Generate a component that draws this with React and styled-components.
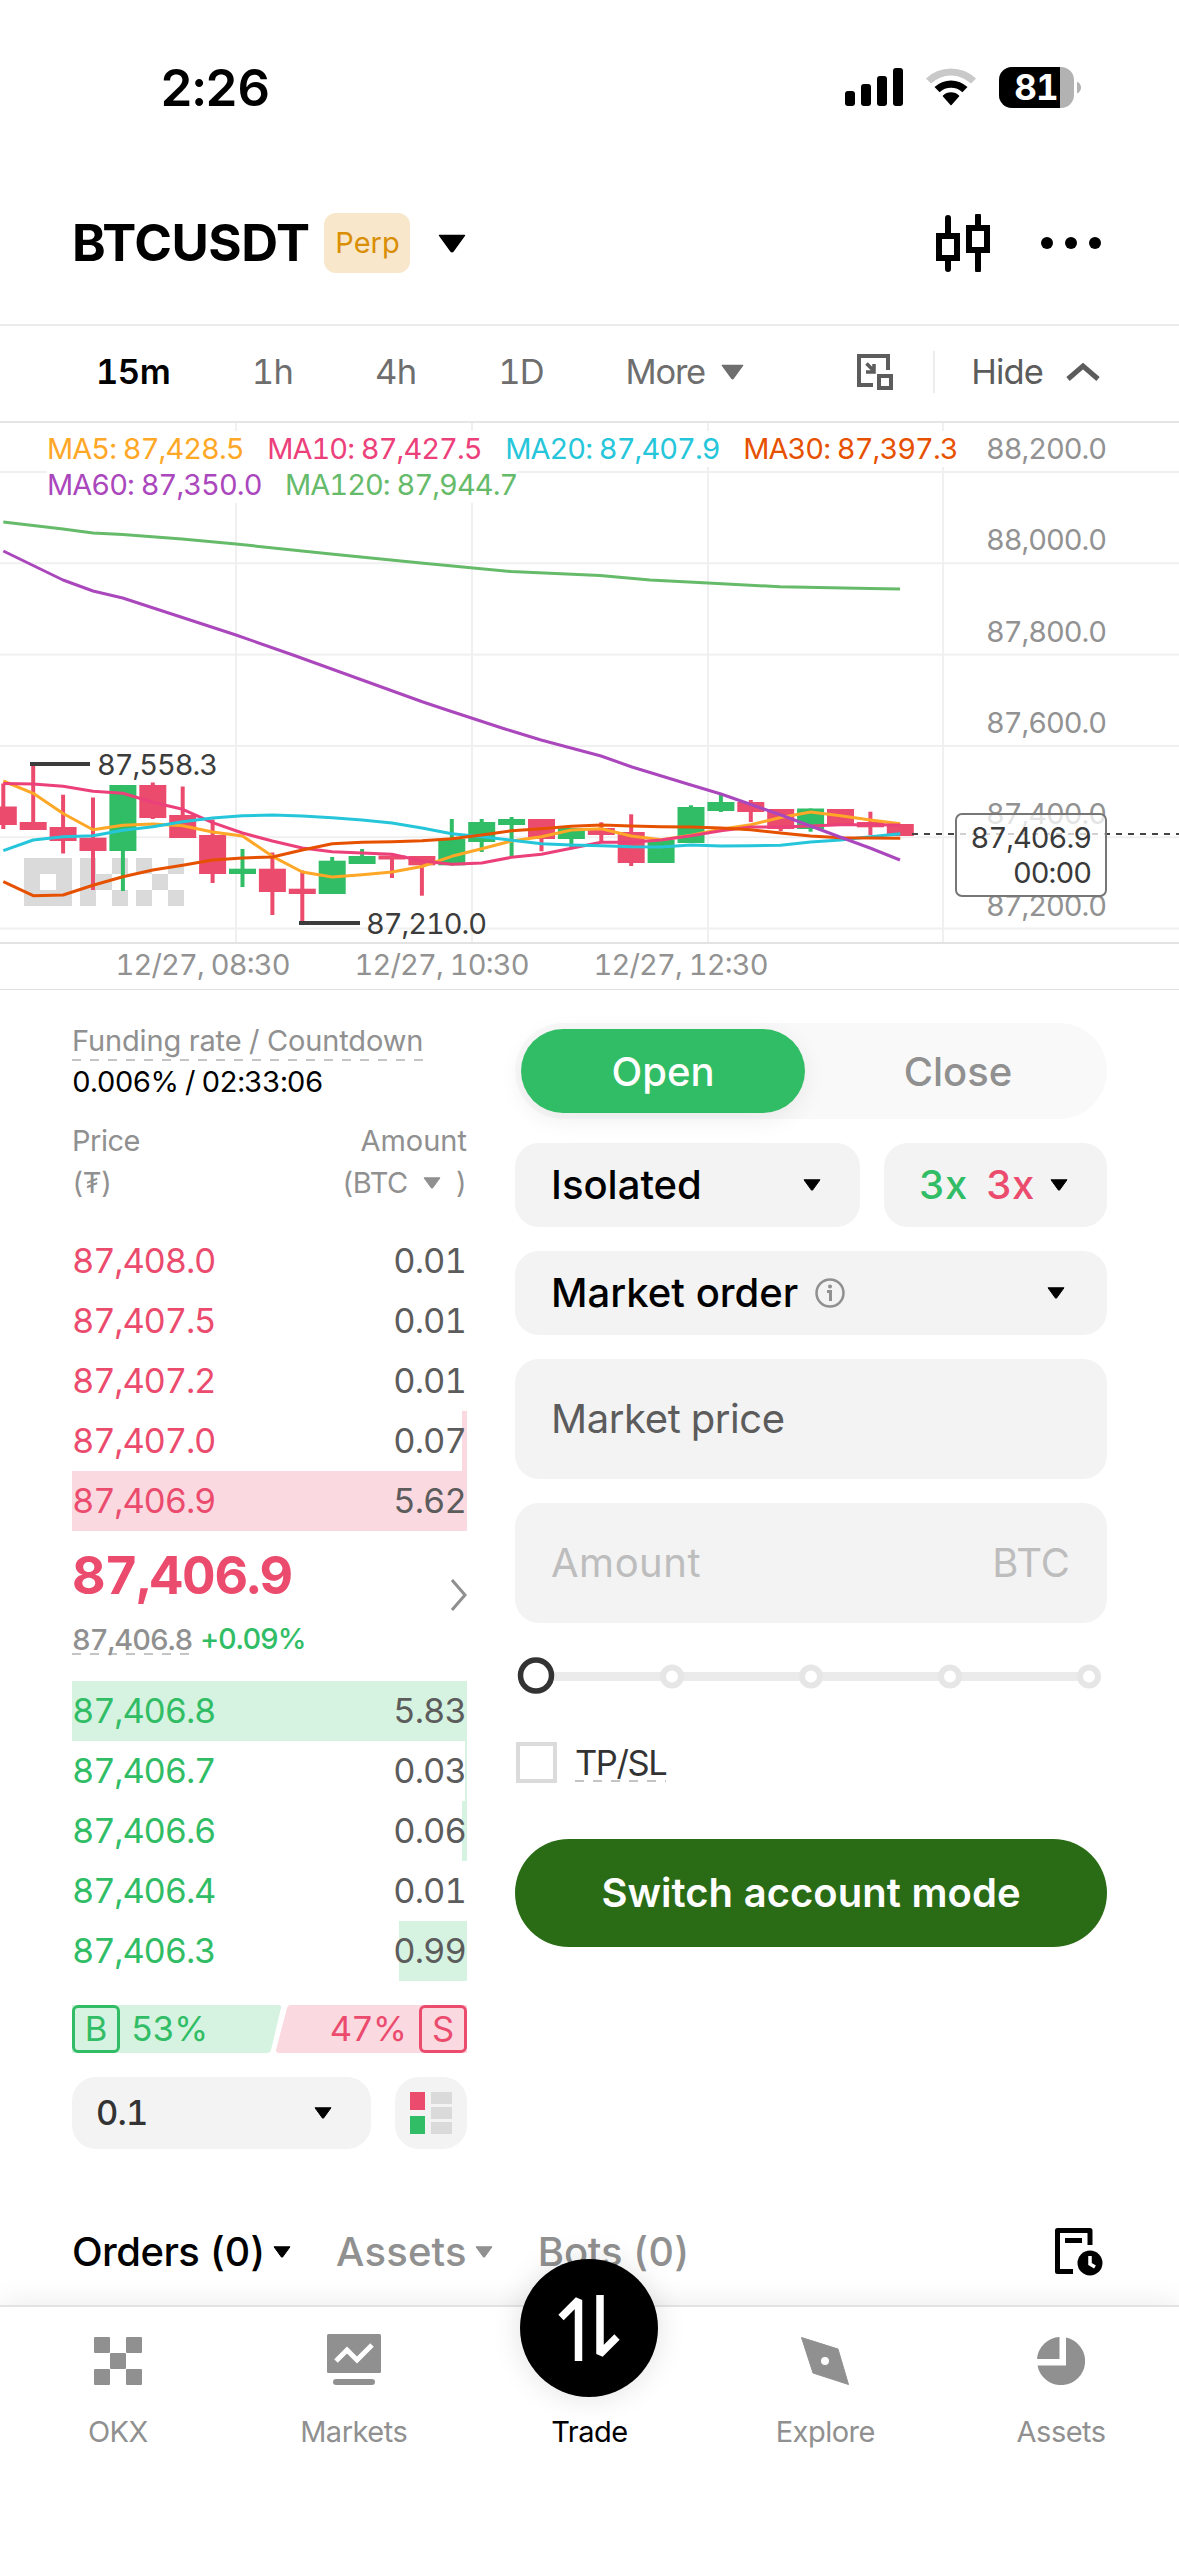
import React, { useState } from 'react';
import styled, { createGlobalStyle } from 'styled-components';

const GREEN = '#31bd65';
const RED = '#eb4b6d';

const GlobalStyle = createGlobalStyle`
  * { box-sizing: border-box; }
  body {
    margin: 0;
    background: #fff;
    color: #000;
    font-family: Inter, "Liberation Sans", sans-serif;
    font-variant-numeric: tabular-nums;
  }
  svg { display: block; flex: none; }
`;

const Screen = styled.div`
  display: flex;
  flex-direction: column;
  width: 1179px;
  height: 2556px;
  overflow: hidden;
  background: #fff;
`;

const Text = styled.span`
  font-size: ${(p) => p.$size || 29}px;
  font-weight: ${(p) => p.$weight || 400};
  color: ${(p) => p.$color || '#000'};
  letter-spacing: ${(p) => p.$ls || 0}px;
  line-height: ${(p) => p.$lh || 42}px;
  white-space: nowrap;
`;

const Dashed = styled(Text)`
  background: repeating-linear-gradient(90deg, #c4c4c4 0 9px, transparent 9px 18px) 0 100% / 100% 2px no-repeat;
`;

/* ---------- top ---------- */

const StatusBar = styled.div`
  display: flex;
  align-items: center;
  justify-content: space-between;
  height: 162px;
  padding: 13px 97px 0 160px;
`;

const StatusIcons = styled.div`
  display: flex;
  align-items: center;
  gap: 23px;
`;

const Header = styled.div`
  display: flex;
  align-items: center;
  height: 162px;
  padding: 0 78px 0 72px;
`;

const Badge = styled.div`
  display: flex;
  align-items: center;
  justify-content: center;
  width: 86px;
  height: 60px;
  margin: 0 28px 0 15px;
  border-radius: 12px;
  background: #f8e7cb;
`;

const Spacer = styled.div`
  flex: 1;
`;

const Intervals = styled.div`
  display: flex;
  align-items: center;
  height: 97px;
  padding: 0 79px 3px 96px;
  border-top: 2px solid #ebebeb;
`;

const IntervalTabs = styled.div`
  display: flex;
  align-items: center;
  gap: 81.5px;
  flex: 1;
`;

const Row = styled.div`
  display: flex;
  align-items: center;
  gap: ${(p) => p.$gap || 0}px;
`;

const ThinLine = styled.div`
  width: 2px;
  height: 42px;
  margin: 0 36px 0 39px;
  background: #ededed;
`;

/* ---------- chart ---------- */

const ChartBox = styled.div`
  position: relative;
  height: 569px;
`;

const Legend = styled.div`
  position: absolute;
  top: 10px;
  left: 47px;
`;

const LegendRow = styled.div`
  display: flex;
  gap: 23.5px;
  width: max-content;
  height: 36px;
  background: #fff;
`;

const PriceTag = styled.div`
  position: absolute;
  top: 392px;
  right: 72px;
  display: flex;
  flex-direction: column;
  align-items: flex-end;
  width: 152px;
  height: 84px;
  padding: 5px 14px 0 0;
  border: 2px solid #777;
  border-radius: 7px;
  background: rgba(255, 255, 255, 0.75);
`;

/* ---------- trading area ---------- */

const Main = styled.div`
  display: flex;
  gap: 48px;
  height: 1232px;
  padding: 0 72px;
`;

const Book = styled.div`
  display: flex;
  flex-direction: column;
  width: 395px;
  padding-top: 30px;
`;

const BookHead = styled.div`
  display: flex;
  justify-content: space-between;
  margin: 17px 0 27px;
`;

const Column = styled.div`
  display: flex;
  flex-direction: column;
  align-items: ${(p) => p.$align || 'flex-start'};
`;

const BookRow = styled.div`
  display: flex;
  align-items: center;
  justify-content: space-between;
  height: 60px;
  padding-right: 1px;
  background: linear-gradient(${(p) => (p.$side === 'sell' ? '#fad9e0, #fad9e0' : '#d6f2e0, #d6f2e0')})
    100% 0 / ${(p) => p.$depth}px 100% no-repeat;
`;

const Last = styled.div`
  display: flex;
  justify-content: space-between;
  height: 150px;
  padding-top: 15px;

  & > svg {
    margin-top: 33px;
  }
`;

const MarkPrice = styled.div`
  display: flex;
  align-items: center;
  gap: 8px;
  margin-top: 12px;
`;

const Ratio = styled.div`
  display: flex;
  position: relative;
  justify-content: space-between;
  height: 48px;
  margin-top: 24px;
`;

const RatioShape = styled.svg`
  position: absolute;
  inset: 0;
`;

const RatioSide = styled.div`
  display: flex;
  position: relative;
  align-items: center;
  gap: ${(p) => p.$gap}px;
`;

const SideBox = styled.div`
  display: flex;
  align-items: center;
  justify-content: center;
  width: 48px;
  height: 48px;
  border: 3px solid ${(p) => p.$color};
  border-radius: 6px;
`;

const Tools = styled.div`
  display: flex;
  justify-content: space-between;
  margin-top: 24px;
`;

const Field = styled.div`
  display: flex;
  align-items: center;
  width: ${(p) => (p.$w ? p.$w + 'px' : '100%')};
  height: ${(p) => p.$h || 84}px;
  padding: ${(p) => p.$pad || '0 39px 0 36px'};
  border-radius: 24px;
  background: #f3f3f3;
  justify-content: ${(p) => p.$justify || 'space-between'};
`;

const Form = styled.div`
  display: flex;
  flex-direction: column;
  width: 592px;
  padding-top: 33px;
  gap: 24px;
`;

const Toggle = styled.div`
  display: flex;
  height: 96px;
  padding: 6px 0 6px 6px;
  border-radius: 48px;
  background: #f9f9f9;
`;

const ToggleItem = styled.div`
  display: flex;
  align-items: center;
  justify-content: center;
  width: ${(p) => (p.$active ? 284 : 302)}px;
  padding: 1px 0 0 ${(p) => (p.$active ? 0 : 4)}px;
  border-radius: 42px;
  cursor: pointer;
  background: ${(p) => (p.$active ? GREEN : 'transparent')};
  box-shadow: ${(p) => (p.$active ? '0 6px 24px rgba(0, 0, 0, 0.07)' : 'none')};
`;

const SliderRow = styled.div`
  display: flex;
  height: 60px;
  padding-top: 8px;
`;

const CheckRow = styled.div`
  display: flex;
  align-items: center;
  gap: 18px;
  height: 42px;
  margin: 10px 0 32px;
`;

const Checkbox = styled.div`
  width: 41px;
  height: 41px;
  margin-left: 1px;
  border: 4px solid #dbdbdb;
`;

const Submit = styled.div`
  display: flex;
  align-items: center;
  justify-content: center;
  height: 108px;
  border-radius: 54px;
  background: #2a6c16;
`;

/* ---------- bottom ---------- */

const OrderTabs = styled.div`
  display: flex;
  align-items: center;
  height: 60px;
  padding: 0 76px 0 72px;
`;

const Nav = styled.div`
  display: grid;
  grid-template-columns: repeat(5, 1fr);
  position: relative;
  flex: 1;
  margin-top: 23px;
  border-top: 2px solid #e3e3e3;
  background: #fff;
  box-shadow: 0 0 30px rgba(0, 0, 0, 0.09);
`;

const NavItem = styled.div`
  display: flex;
  flex-direction: column;
  align-items: center;
  position: relative;
  gap: 26px;
  padding-top: 27px;
`;

const NavIcon = styled.div`
  display: flex;
  align-items: center;
  justify-content: center;
  height: 54px;
`;

const TradeButton = styled.div`
  display: flex;
  align-items: center;
  justify-content: center;
  position: absolute;
  top: -48px;
  width: 138px;
  height: 138px;
  border-radius: 50%;
  background: #000;
  box-shadow: 0 0 30px rgba(0, 0, 0, 0.12);
`;

const Caret = ({ w = 18, h = 12, color = '#000' }) => (
  <svg width={w} height={h} viewBox="0 0 18 12">
    <path d="M1 .8h16L9.6 11q-.6.7-1.2 0z" fill={color} stroke={color} strokeWidth="1" strokeLinejoin="round" />
  </svg>
);

const Signal = () => (
  <svg width="58" height="42" viewBox="0 0 58 42">
    <rect x="0" y="24" width="10" height="15" rx="3" />
    <rect x="16" y="17" width="10" height="22" rx="3" />
    <rect x="32" y="9" width="10" height="30" rx="3" />
    <rect x="48" y="1" width="10" height="38" rx="3" />
  </svg>
);

const Wifi = () => (
  <svg width="50" height="42" viewBox="0 0 50 42">
    <path d="M0 11.5A36 36 0 0 1 50 11.5L45 16.6A29 29 0 0 0 5 16.6Z" fill="#c9c9c9" />
    <path d="M8.5 20A24 24 0 0 1 41.5 20L36.4 25.2A17 17 0 0 0 13.6 25.2Z" />
    <path d="M17.5 29A11 11 0 0 1 32.5 29L25 37.5Z" stroke="#000" strokeWidth="1.5" strokeLinejoin="round" />
  </svg>
);

const Battery = () => (
  <svg width="83" height="42" viewBox="0 0 83 42">
    <clipPath id="cell"><rect width="75" height="41" rx="13" /></clipPath>
    <g clipPath="url(#cell)">
      <rect width="75" height="41" fill="#b2b2b2" />
      <rect width="61" height="41" />
    </g>
    <path d="M78 14.5q4 2 4 6t-4 6z" fill="#b2b2b2" />
    <text x="37" y="33" textAnchor="middle" fontSize="35" fontWeight="700" fill="#fff" letterSpacing="-1">81</text>
  </svg>
);

const CandleIcon = () => (
  <svg width="56" height="58" viewBox="0 0 56 58" fill="none" stroke="#000" strokeWidth="6">
    <path d="M12 4v17M12 46v9M42 2v12M42 38v18" strokeLinecap="round" />
    <rect x="3" y="22" width="18" height="22" />
    <rect x="33" y="14" width="18" height="22" />
  </svg>
);

const Dots = () => (
  <svg width="60" height="12" viewBox="0 0 60 12">
    <circle cx="6" cy="6" r="6" />
    <circle cx="30" cy="6" r="6" />
    <circle cx="54" cy="6" r="6" />
  </svg>
);

const PipIcon = () => (
  <svg width="37" height="37" viewBox="0 0 37 37" fill="none" stroke="#5c5c5c" strokeWidth="4">
    <path d="M16 31H2V2h29v14" />
    <rect x="22" y="22" width="12" height="12" />
    <path d="M9.5 9.5l6.5 6.500M17 10v8H9" strokeWidth="3.5" />
  </svg>
);

const HistoryIcon = () => (
  <svg width="48" height="48" viewBox="0 0 48 48">
    <path d="M18 43.5H2.5V2.5H35V17" fill="none" stroke="#000" strokeWidth="5" strokeLinejoin="round" />
    <rect x="10" y="10" width="17" height="5" />
    <circle cx="35" cy="35" r="12.5" />
    <path d="M35 28v8l5 3" fill="none" stroke="#fff" strokeWidth="3.5" />
  </svg>
);

const X0 = 3.3;
const STEP = 29.9;

// [r = down / g = up, body top, body bottom, wick top, wick bottom]
const candles = [
  ['r', 806.5, 825, 783.5, 829], ['r', 822, 830, 764, 830], ['r', 827, 841, 794.7, 853.5],
  ['r', 837.7, 851, 797.5, 890], ['g', 785, 851, 785, 891], ['r', 785, 818, 782.5, 819],
  ['r', 815, 838, 786.5, 838], ['r', 835, 874, 819.5, 883], ['g', 868.7, 874, 849, 887],
  ['r', 868.7, 892, 852.5, 915], ['r', 888.7, 894, 870.5, 923], ['g', 860.7, 894, 857, 894],
  ['g', 856, 864, 849, 864], ['r', 855.5, 859.5, 855.5, 878], ['r', 856, 865.3, 856, 895.7],
  ['g', 839, 865.3, 819, 865.3], ['g', 822, 842, 819, 852], ['g', 819, 825, 817, 857],
  ['r', 819, 839, 819, 851.3], ['g', 828, 839, 828, 847.3], ['r', 828, 835, 822.3, 841],
  ['r', 832, 863, 814.3, 866], ['g', 840, 863, 840, 863], ['g', 807, 843, 805.3, 843],
  ['g', 802, 811, 793.3, 812], ['r', 802, 812, 800, 822], ['r', 809, 829, 809, 831],
  ['g', 808.5, 829, 808.5, 831.7], ['r', 809, 825, 809, 825], ['r', 822, 827.3, 811.7, 835],
  ['r', 824, 836, 824, 836],
];

const averages = [
  { color: '#ffa726', ys: [781, 793.3, 813.5, 829.7, 825.3, 824, 825.7, 832, 836, 856.3, 872, 877, 874.7, 872, 866.5, 856.3, 848.7, 841, 836.7, 830, 828.7, 836, 839.7, 835.3, 829.3, 824.7, 817.5, 812, 815.7, 820, 823.7] },
  { color: '#ec407a', ys: [783.5, 784, 786.3, 791.3, 793.3, 802.3, 809.3, 822.7, 833, 841, 848, 851.7, 853, 854.3, 861, 864.3, 863, 857.3, 854.3, 848.3, 842.3, 842.3, 840, 835.7, 830.7, 827, 827, 826, 824.7, 824.8, 825] },
  { color: '#26c6da', ys: [850.7, 840, 836.7, 835.7, 830.3, 826.7, 821.7, 818, 815.7, 815, 816, 817.7, 820, 823, 828, 833.7, 836.7, 840.3, 843.7, 845, 845.7, 846.7, 847, 845, 846, 845.7, 845.3, 842, 840, 836.7, 833.7] },
  { color: '#e65100', ys: [881.7, 895.7, 895, 885.3, 876.7, 870, 865.3, 860, 858, 857, 850, 843.7, 842.3, 841.7, 840.7, 838.7, 835, 830.7, 828.7, 826.3, 825, 826, 826.7, 827, 828, 829.7, 833, 836, 837.7, 838, 838.3] },
];

const legend = [
  [['MA5: 87,428.5', '#ffa726'], ['MA10: 87,427.5', '#ec407a'], ['MA20: 87,407.9', '#26c6da'], ['MA30: 87,397.3', '#e65100']],
  [['MA60: 87,350.0', '#ab47bc'], ['MA120: 87,944.7', '#66bb6a']],
];

const priceAxis = ['88,200.0', '88,000.0', '87,800.0', '87,600.0', '87,400.0', '87,200.0'];
const timeAxis = [['12/27, 08:30', 115.5], ['12/27, 10:30', 354.5], ['12/27, 12:30', 593.5]];

const toPoints = (ys) => ys.map((y, i) => `${X0 + i * STEP},${y}`).join(' ');

const Chart = () => (
  <ChartBox>
    <svg width="1179" height="569" viewBox="0 421 1179 569" fontSize="29">
      <g fill="#f0f0f0">
        {priceAxis.map((p, i) => <rect key={p} x="0" y={471 + i * 91.3} width="1179" height="2" />)}
        {[235, 471, 707, 942].map((x) => <rect key={x} x={x} y="421" width="2" height="522" />)}
      </g>
      <rect y="421" width="1179" height="2" fill="#e5e5e5" />
      <rect y="942" width="1179" height="2" fill="#e3e3e3" />
      <rect y="989" width="1179" height="1" fill="#e0e0e0" />

      <g fill="#dadada">
        <path fillRule="evenodd" d="M24 858h48v48h-48zM40 874v16h16v-16z" />
        <path d="M80 858h16v48h-16zM96 874h16v16h-16zM112 858h16v16h-16zM112 890h16v16h-16z" />
        <path d="M136 858h16v16h-16zM168 858h16v16h-16zM152 874h16v16h-16zM136 890h16v16h-16zM168 890h16v16h-16z" />
      </g>

      {candles.map(([kind, top, bottom, high, low], i) => {
        const x = X0 + i * STEP;
        return (
          <g key={i} fill={kind === 'g' ? GREEN : RED}>
            <rect x={x - 13.5} y={top} width="27" height={bottom - top} />
            <rect x={x - 2} y={high} width="4" height={low - high} />
          </g>
        );
      })}

      <g fill="none" strokeWidth="3" strokeLinejoin="round">
        {averages.map((a) => <polyline key={a.color} stroke={a.color} points={toPoints(a.ys)} />)}
        <polyline stroke="#ab47bc" points="3.3,551 63,580 93,591 122.7,598 236,635 293,655 423,702 447,710 505,729 541,740 601,756 632,767 691,785 721,794 751,804.5 781,815 840,837 870,848 900,860" />
        <polyline stroke="#66bb6a" points="3.3,522 63,529 93,533 122.7,534.5 182,539 236,544 331,554 421,563 511,571.5 600,575.5 650,580 708,583 780,586.7 870,588.5 900,589" />
      </g>

      <path d="M30 764h60M299 923h61" stroke="#3c3c3c" strokeWidth="4" />
      <g fill="#3c3c3c">
        <text x="97" y="775" textLength="121">87,558.3</text>
        <text x="366" y="934" textLength="121">87,210.0</text>
      </g>
      <path d="M912 834H1179" stroke="#444" strokeWidth="2" strokeDasharray="6 6" />
      <g fill="#929292">
        {priceAxis.map((p, i) => <text key={p} x="986" y={459 + i * 91.3} textLength="121">{p}</text>)}
        {timeAxis.map(([t, x]) => <text key={t} x={x} y="975" textLength="175">{t}</text>)}
      </g>
    </svg>
    <Legend>
      {legend.map((row, i) => (
        <LegendRow key={i}>
          {row.map(([label, color]) => <Text key={label} $color={color} $lh={36} $ls={-0.95}>{label}</Text>)}
        </LegendRow>
      ))}
    </Legend>
    <PriceTag>
      <Text $color="#3a3a3a" $lh={35} $ls={-1}>87,406.9</Text>
      <Text $color="#3a3a3a" $lh={35} $ls={-1}>00:00</Text>
    </PriceTag>
  </ChartBox>
);

const asks = [['87,408.0', '0.01', 0], ['87,407.5', '0.01', 0], ['87,407.2', '0.01', 0], ['87,407.0', '0.07', 5], ['87,406.9', '5.62', 395]];
const bids = [['87,406.8', '5.83', 395], ['87,406.7', '0.03', 2], ['87,406.6', '0.06', 5], ['87,406.4', '0.01', 0], ['87,406.3', '0.99', 68]];

const BookRows = ({ rows, side }) => rows.map(([price, amount, depth]) => (
  <BookRow key={price} $side={side} $depth={depth}>
    <Text $size={34.5} $ls={-1.2} $color={side === 'sell' ? RED : GREEN}>{price}</Text>
    <Text $size={34.5} $ls={-0.9} $color="#5c5c5c">{amount}</Text>
  </BookRow>
));

const OrderBook = () => (
  <Book>
    <Row><Dashed $color="#909090" $lh={41} $ls={-0.15}>Funding rate / Countdown</Dashed></Row>
    <Text $ls={-0.9}>0.006% / 02:33:06</Text>
    <BookHead>
      <Column>
        <Text $color="#909090" $ls={-0.5}>Price</Text>
        <Text $color="#909090" $ls={-0.5}>(₮)</Text>
      </Column>
      <Column $align="flex-end">
        <Text $color="#909090">Amount</Text>
        <Row $gap={15}>
          <Text $color="#909090" $ls={-0.5}>(BTC</Text>
          <Caret color="#909090" />
          <Text $color="#909090">)</Text>
        </Row>
      </Column>
    </BookHead>
    <BookRows rows={asks} side="sell" />
    <Last>
      <Column>
        <Text $size={52} $weight={700} $color={RED} $lh={60} $ls={-1.2}>87,406.9</Text>
        <MarkPrice>
          <Dashed $weight={500} $color="#909090" $lh={31} $ls={-1}>87,406.8</Dashed>
          <Text $weight={500} $color={GREEN} $ls={-1.1}>+0.09%</Text>
        </MarkPrice>
      </Column>
      <svg width="16" height="32" viewBox="0 0 16 32">
        <path d="M1 1l13 15L1 31" fill="none" stroke="#909090" strokeWidth="3" />
      </svg>
    </Last>
    <BookRows rows={bids} side="buy" />
    <Ratio>
      <RatioShape width="395" height="48">
        <path d="M0 0H207q3 0 2 3L199 45q-1 3-4 3H0z" fill="#d6f2e0" />
        <path d="M395 0H219q-3 0-4 3L204 45q0 3 3 3H395z" fill="#fad9e0" />
      </RatioShape>
      <RatioSide $gap={11}>
        <SideBox $color={GREEN}><Text $size={34.5} $color={GREEN}>B</Text></SideBox>
        <Text $size={34.5} $ls={-0.8} $color={GREEN}>53%</Text>
      </RatioSide>
      <RatioSide $gap={13}>
        <Text $size={34.5} $ls={-0.8} $color={RED}>47%</Text>
        <SideBox $color={RED}><Text $size={34.5} $color={RED}>S</Text></SideBox>
      </RatioSide>
    </Ratio>
    <Tools>
      <Field $w={299} $h={72} $pad="0 39px 0 24px">
        <Text $size={34.5} $weight={500} $ls={-0.8} $color="#333">0.1</Text>
        <Caret />
      </Field>
      <Field $w={72} $h={72} $pad="0" $justify="center">
        <svg width="42" height="42" viewBox="0 0 42 42">
          <rect width="15" height="18" fill={RED} />
          <rect y="24" width="15" height="18" fill={GREEN} />
          <path d="M21 0h21v12h-21zM21 15h21v12h-21zM21 30h21v12h-21z" fill="#dadada" />
        </svg>
      </Field>
    </Tools>
  </Book>
);

const Slider = () => (
  <SliderRow>
    <svg width="592" height="40" viewBox="0 0 592 40">
      <rect x="21" y="17" width="553" height="9" fill="#ebebeb" />
      {[157, 296, 435, 574].map((x) => (
        <circle key={x} cx={x} cy="21.5" r="9" fill="#fff" stroke="#e6e6e6" strokeWidth="6" />
      ))}
      <circle cx="21" cy="20.5" r="15.5" fill="#fff" stroke="#333" strokeWidth="5.5" />
    </svg>
  </SliderRow>
);

const OrderForm = () => {
  const [tab, setTab] = useState('Open');
  return (
    <Form>
      <Toggle>
        {['Open', 'Close'].map((name) => (
          <ToggleItem key={name} $active={tab === name} onClick={() => setTab(name)}>
            <Text $size={40} $weight={500} $color={tab === name ? '#fff' : '#909090'}>{name}</Text>
          </ToggleItem>
        ))}
      </Toggle>
      <Row $gap={24}>
        <Field $w={345}>
          <Text $size={40} $weight={500}>Isolated</Text>
          <Caret />
        </Field>
        <Field $w={223} $pad="0 39px 0 35px">
          <Row $gap={19}>
            <Text $size={40} $weight={500} $color={GREEN}>3x</Text>
            <Text $size={40} $weight={500} $color={RED}>3x</Text>
          </Row>
          <Caret />
        </Field>
      </Row>
      <Field $pad="0 42px 0 36px">
        <Row $gap={17}>
          <Text $size={40} $weight={500}>Market order</Text>
          <svg width="30" height="30" viewBox="0 0 30 30" fill="none" stroke="#909090" strokeWidth="2.5">
            <circle cx="15" cy="15" r="13.5" />
            <path d="M12 13.5h3.5V23" strokeWidth="3" />
            <circle cx="15" cy="8.5" r="2" fill="#909090" stroke="none" />
          </svg>
        </Row>
        <Caret />
      </Field>
      <Field $h={120}><Text $size={40} $ls={-0.4} $color="#5c5c5c">Market price</Text></Field>
      <Field $h={120} $pad="0 37px 0 36px">
        <Text $size={40} $ls={0.5} $color="#bdbdbd">Amount</Text>
        <Text $size={40} $color="#bdbdbd">BTC</Text>
      </Field>
      <Slider />
      <CheckRow>
        <Checkbox />
        <Dashed $size={34.5} $lh={39} $ls={-1.4} $color="#333">TP/SL</Dashed>
      </CheckRow>
      <Submit><Text $size={40} $weight={600} $color="#fff">Switch account mode</Text></Submit>
    </Form>
  );
};

const navItems = [
  ['OKX', (
    <svg width="48" height="48" viewBox="0 0 48 48" fill="#909090">
      <rect width="16" height="16" rx="1" /><rect x="32" width="16" height="16" rx="1" />
      <rect x="16" y="16" width="16" height="16" rx="1" />
      <rect y="32" width="16" height="16" rx="1" /><rect x="32" y="32" width="16" height="16" rx="1" />
    </svg>
  )],
  ['Markets', (
    <svg width="54" height="54" viewBox="0 0 54 54">
      <rect width="54" height="39" rx="1.5" fill="#909090" />
      <path d="M9 27l11-11 10 10L45 11" fill="none" stroke="#fff" strokeWidth="5" />
      <rect x="6" y="45" width="42" height="6" rx="3" fill="#909090" />
    </svg>
  )],
  ['Trade', null],
  ['Explore', (
    <svg width="48" height="48" viewBox="0 0 48 48" fill="#909090">
      <path fillRule="evenodd" stroke="#909090" strokeLinejoin="round" d="M.5.5L37 12l10.5 35.5L12 36zM24 19.5a4.5 4.5 0 1 0 .01 0z" />
    </svg>
  )],
  ['Assets', (
    <svg width="48" height="48" viewBox="0 0 48 48" fill="#909090">
      <path d="M29 .6V28.5H.5A24 24 0 1 0 29 .6z" />
      <path d="M22.5 0V22H0A24 24 0 0 1 22.5 0z" />
    </svg>
  )],
];

const BottomNav = () => (
  <Nav>
    {navItems.map(([name, icon]) => (
      <NavItem key={name}>
        {name === 'Trade' && (
          <TradeButton>
            <svg width="62" height="68" viewBox="0 0 62 68" fill="none" stroke="#fff" strokeWidth="7.5" strokeLinejoin="bevel">
              <path d="M20.5 67V6L3 23.5M42 1V60L59 43" />
            </svg>
          </TradeButton>
        )}
        <NavIcon>{icon}</NavIcon>
        <Text $lh={36} $ls={-0.5} $color={name === 'Trade' ? '#000' : '#909090'}>{name}</Text>
      </NavItem>
    ))}
  </Nav>
);

const App = () => (
  <>
    <GlobalStyle />
    <Screen>
      <StatusBar>
        <Text $size={51} $weight={600} $ls={-0.8}>2:26</Text>
        <StatusIcons><Signal /><Wifi /><Battery /></StatusIcons>
      </StatusBar>
      <Header>
        <Text $size={51} $weight={700} $ls={-0.5}>BTCUSDT</Text>
        <Badge><Text $color="#d98e04">Perp</Text></Badge>
        <Caret w={28} h={19} />
        <Spacer />
        <Row $gap={49}><CandleIcon /><Dots /></Row>
      </Header>
      <Intervals>
        <IntervalTabs>
          <Text $size={34.5} $weight={600} $ls={-0.5}>15m</Text>
          <Text $size={34.5} $ls={-0.5} $color="#6e6e6e">1h</Text>
          <Text $size={34.5} $ls={-0.5} $color="#6e6e6e">4h</Text>
          <Text $size={34.5} $ls={-0.8} $color="#6e6e6e">1D</Text>
          <Row $gap={16}>
            <Text $size={34.5} $ls={-1.2} $color="#6e6e6e">More</Text>
            <Caret w={23} h={16} color="#6e6e6e" />
          </Row>
        </IntervalTabs>
        <PipIcon />
        <ThinLine />
        <Row $gap={23}>
          <Text $size={34.5} $ls={-0.9} $color="#5c5c5c">Hide</Text>
          <svg width="34" height="18" viewBox="0 0 34 18">
            <path d="M2 16L17 3l15 13" fill="none" stroke="#5c5c5c" strokeWidth="5" />
          </svg>
        </Row>
      </Intervals>
      <Chart />
      <Main>
        <OrderBook />
        <OrderForm />
      </Main>
      <OrderTabs>
        <Row $gap={45}>
          <Row $gap={8}><Text $size={40} $weight={500} $ls={-0.55}>Orders (0)</Text><Caret /></Row>
          <Row $gap={8}><Text $size={40} $weight={500} $ls={0.2} $color="#909090">Assets</Text><Caret color="#909090" /></Row>
          <Text $size={40} $weight={500} $ls={-0.2} $color="#909090">Bots (0)</Text>
        </Row>
        <Spacer />
        <HistoryIcon />
      </OrderTabs>
      <BottomNav />
    </Screen>
  </>
);

export default App;
